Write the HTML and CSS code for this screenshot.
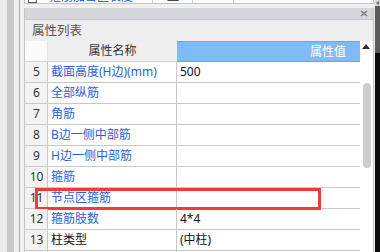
FILE: index.html
```html
<!DOCTYPE html>
<html lang="zh-CN">
<head>
<meta charset="utf-8">
<title>属性列表</title>
<link rel="stylesheet" href="styles.css">
</head>
<body>
<div class="screen">
  <div class="strip s1"></div>
  <div class="strip s2"></div>
  <div class="strip s3"></div>
  <div class="strip s4"></div>
  <div class="main">
    <div class="prev-row">
      <div class="pc pc-first"><span class="pc-icon"></span><span class="pc-text">箍筋加密区长度</span></div>
      <div class="pc pc-a"><span class="pc-glyph">皿</span></div>
      <div class="pc pc-b"></div>
      <div class="pc pc-c"></div>
    </div>
    <div class="panel">
      <div class="titlebar">
        <svg class="close" width="8" height="7" viewBox="0 0 8 7"><path d="M1 1 L7 6 M7 1 L1 6" stroke="#7c7c7c" stroke-width="1.6" fill="none"/></svg>
      </div>
      <div class="caption">属性列表</div>
      <div class="body">
        <div class="grid">
          <div class="row head">
            <div class="c num"></div>
            <div class="c name">属性名称</div>
            <div class="c val">属性值</div>
          </div>
          <div class="row"><div class="c num">5</div><div class="c name link">截面高度(H边)(mm)</div><div class="c val">500</div></div>
          <div class="row"><div class="c num">6</div><div class="c name link">全部纵筋</div><div class="c val"></div></div>
          <div class="row"><div class="c num">7</div><div class="c name link">角筋</div><div class="c val"></div></div>
          <div class="row"><div class="c num">8</div><div class="c name link">B边一侧中部筋</div><div class="c val"></div></div>
          <div class="row"><div class="c num">9</div><div class="c name link">H边一侧中部筋</div><div class="c val"></div></div>
          <div class="row"><div class="c num">10</div><div class="c name link">箍筋</div><div class="c val"></div></div>
          <div class="row marked"><div class="c num">11</div><div class="c name link">节点区箍筋</div><div class="c val"></div><div class="highlight"></div></div>
          <div class="row"><div class="c num">12</div><div class="c name link">箍筋肢数</div><div class="c val">4*4</div></div>
          <div class="row"><div class="c num">13</div><div class="c name">柱类型</div><div class="c val">(中柱)</div></div>
          <div class="row"><div class="c num"></div><div class="c name"></div><div class="c val"></div></div>
        </div>
        <div class="vscroll">
          <div class="up"></div>
          <div class="thumb"></div>
        </div>
      </div>
    </div>
  </div>
  <div class="edge"></div>
  <div class="outer-sb">
    <div class="osb-cap"><span class="osb-arrow"></span></div>
    <div class="osb-thumb"></div>
    <div class="osb-track"></div>
  </div>
</div>
</body>
</html>
```

FILE: styles.css
```css
* { box-sizing: border-box; }
html, body { margin: 0; padding: 0; }
body {
  width: 380px;
  height: 252px;
  overflow: hidden;
  background: #f0f0f0;
  font-family: "Noto Sans", "Noto Sans CJK SC", sans-serif;
  font-size: 12px;
}
.screen {
  display: flex;
  width: 380px;
  height: 252px;
  overflow: hidden;
}
.strip { height: 252px; flex: none; }
.s1 { width: 7px; background: #ebebeb; }
.s2 { width: 7px; background: #cacaca; }
.s3 { width: 5px; background: #efefef; }
.s4 { width: 1px; background: #a9a9a9; }

.main {
  width: 354px;
  flex: none;
  padding-left: 4px;
  background: #f0f0f0;
  display: flex;
  flex-direction: column;
  gap: 4px;
}

/* cut-off row of the table above */
.prev-row {
  height: 4px;
  width: 350px;
  display: grid;
  grid-template-columns: 128px 40px 41px 1fr;
  background: #ffffff;
  border-left: 1px solid #c4c4c4;
  border-right: 1px solid #c4c4c4;
  border-bottom: 1px solid #c4c4c4;
  overflow: hidden;
}
.pc {
  height: 3px;
  border-right: 1px solid #c8c8c8;
  display: flex;
  align-items: flex-end;
  overflow: hidden;
}
.pc-c { border-right: none; }
.pc-first { gap: 12px; padding-left: 3px; }
.pc-icon {
  width: 9px;
  height: 9px;
  border: 1px solid #555;
  flex: none;
}
.pc-text {
  color: #2b5fd6;
  line-height: 16px;
  margin-bottom: -2px;
}
.pc-a { padding-left: 14px; }
.pc-glyph { color: #444; line-height: 16px; margin-bottom: -2px; }

.panel {
  width: 350px;
  flex: 1;
  border-left: 1px solid #c4c4c4;
  border-right: 1px solid #c4c4c4;
  background: #ffffff;
  display: flex;
  flex-direction: column;
  overflow: hidden;
}
.titlebar {
  height: 12px;
  flex: none;
  background: #d5d7db;
  border-bottom: 1px solid #c2c4c8;
  display: flex;
  justify-content: flex-end;
  align-items: center;
  padding-right: 5px;
}
.close { display: block; }
.caption {
  height: 21px;
  flex: none;
  background: #eeeeee;
  color: #555555;
  font-size: 12.5px;
  line-height: 21px;
  padding-left: 7px;
}
.body {
  display: flex;
  flex: 1;
}
.grid {
  width: 335px;
  flex: none;
  display: flex;
  flex-direction: column;
}
.row {
  display: grid;
  grid-template-columns: 23px 129px 183px;
  height: 21px;
  flex: none;
  border-bottom: 1px solid #c8c8c8;
  position: relative;
}
.c {
  display: flex;
  align-items: center;
  line-height: 20px;
  white-space: nowrap;
  overflow: hidden;
}
.num {
  background: #f3f3f3;
  border-right: 1px solid #c8c8c8;
  justify-content: center;
  color: #333333;
  padding-left: 1px;
}
.name {
  border-right: 1px solid #c8c8c8;
  padding-left: 3px;
  color: #111111;
}
.name.link { color: #2b5fd6; }
.val {
  padding-left: 3px;
  color: #111111;
}
.row.head { border-bottom: 1px solid #d4d4d4; }
.head .num { background: #fbfbfb; border-right: 1px solid #e6e6e6; }
.head .name {
  background: #f0f0f0;
  justify-content: center;
  color: #333333;
  padding-left: 0;
  border-right: none;
}
.head .val {
  background: #80bbf6;
  border-top: 1px solid #62a5ee;
  margin-bottom: -1px;
  border-bottom: 1px solid #62a5ee;
  justify-content: flex-end;
  padding-right: 14px;
  color: #ffffff;
}
.highlight {
  position: absolute;
  left: 10px;
  top: 0;
  width: 286px;
  height: 22px;
  border: 3px solid #f23a3a;
  pointer-events: none;
}

.vscroll {
  width: 13px;
  flex: none;
  background: #ffffff;
  display: flex;
  flex-direction: column;
  align-items: flex-start;
}
.up {
  width: 0;
  height: 0;
  margin-top: 3px;
  margin-left: 2px;
  border-left: 4.5px solid transparent;
  border-right: 4.5px solid transparent;
  border-bottom: 5px solid #2d2d2d;
}
.thumb {
  width: 8px;
  height: 85px;
  margin-top: 34px;
  margin-left: 3px;
  background: #cdcdcd;
  border-radius: 4px;
}

.edge {
  width: 1px;
  flex: none;
  background: #ececec;
}
.outer-sb {
  width: 5px;
  flex: none;
  display: flex;
  flex-direction: column;
}
.osb-cap {
  height: 6px;
  background: #d8d8d8;
  display: flex;
  align-items: center;
  justify-content: center;
}
.osb-arrow {
  width: 0;
  height: 0;
  border-top: 2.5px solid transparent;
  border-bottom: 2.5px solid transparent;
  border-right: 3px solid #6a6a6a;
}
.osb-thumb {
  height: 47px;
  background: #5a5a5a;
}
.osb-track {
  flex: 1;
  background: #0b0b0b;
}
```
